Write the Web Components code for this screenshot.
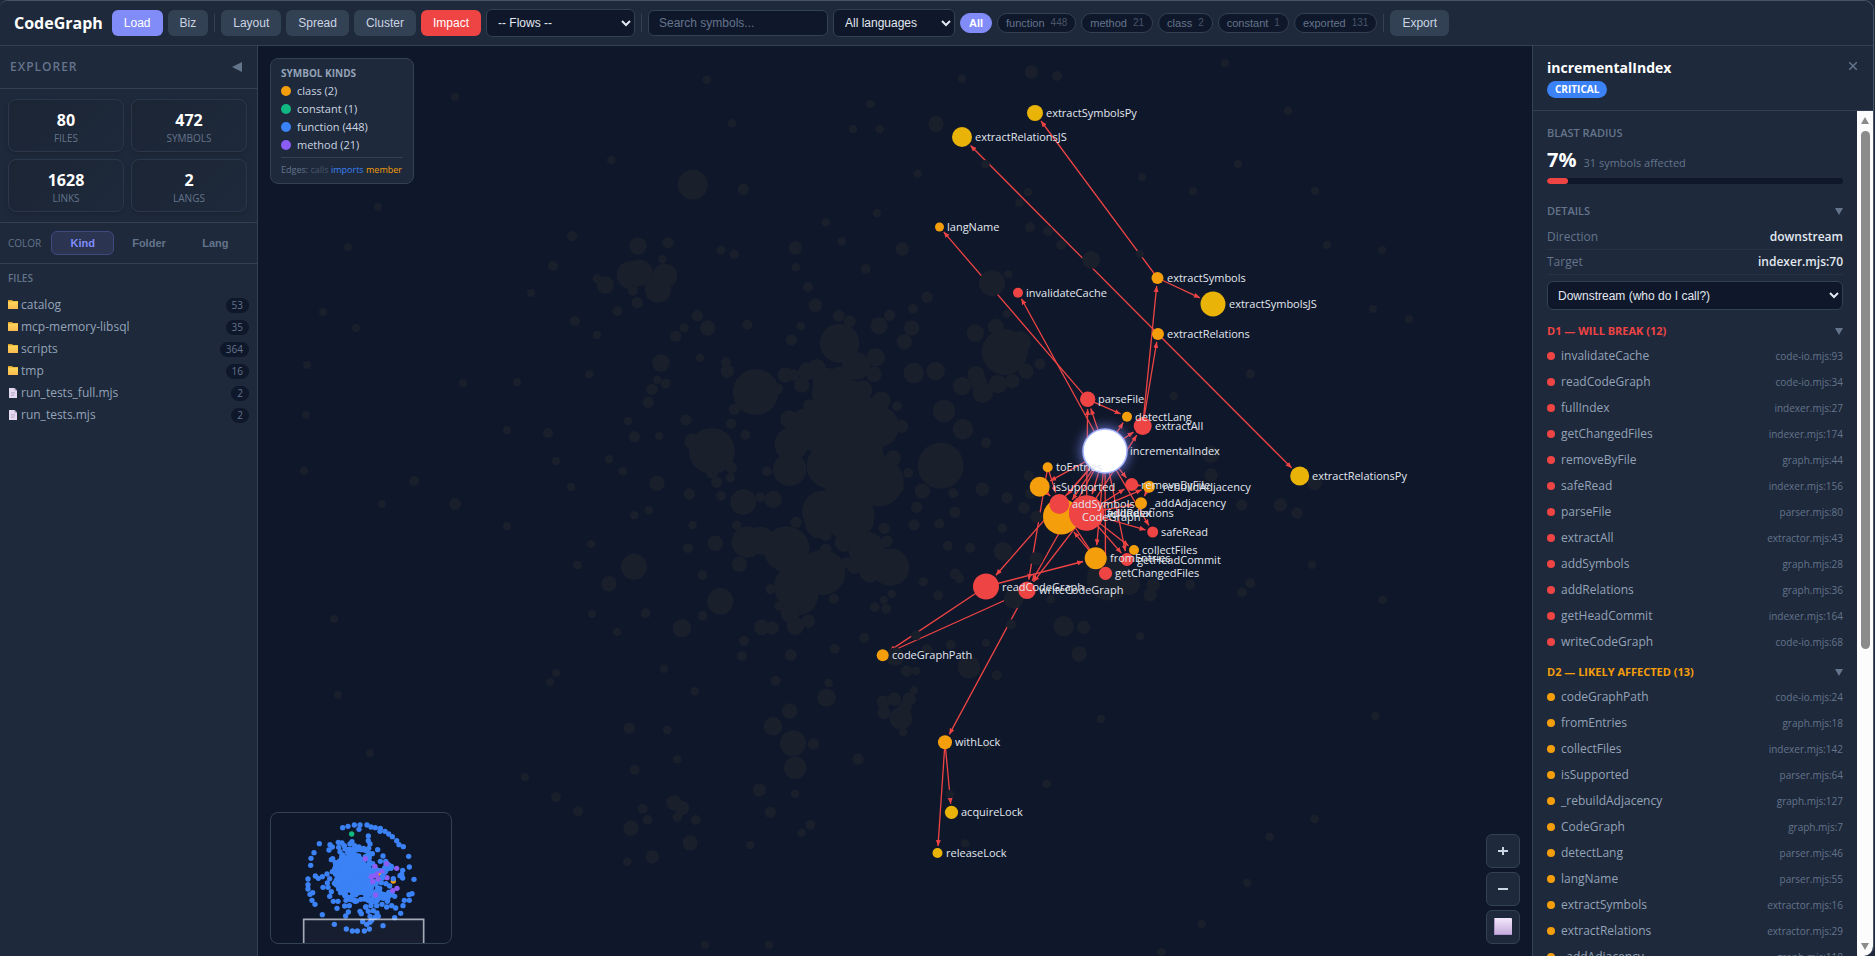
<!DOCTYPE html>
<html lang="en">
<head>
<meta charset="utf-8">
<title>CodeGraph</title>
<style>
  html, body { height: 100%; margin: 0; background: #1e293b; }
  body {
    --bg: #0f172a; --panel: #1e293b; --line: #334155; --muted: #64748b; --soft: #94a3b8;
    --text: #e2e8f0; --accent: #818cf8; --red: #ef4444; --amber: #f59e0b; --blue: #3b82f6;
    --ui: "Liberation Sans", Arial, sans-serif;
    font: 12px/18px "Open Sans", "Noto Sans", sans-serif; color: var(--text);
    overflow: hidden;
  }
</style>
</head>
<body>
<code-graph-app></code-graph-app>

<script>
const define = (name, html, init) => customElements.define(name, class extends HTMLElement {
  constructor() {
    super();
    const t = document.createElement('template');
    t.innerHTML = html;
    this.attachShadow({ mode: 'open' }).append(t.content.cloneNode(true));
  }
  connectedCallback() { if (init) init.call(this, this.shadowRoot); }
});

/* ---------- toolbar ---------- */
define('cg-button', `<style>
  :host { display: block; flex: none; }
  button { display: block; height: 26px; padding: 0 12px; border: 0; border-radius: 6px; background: #334155; color: #cbd5e1; font: 12px/26px var(--ui); cursor: pointer; }
  :host([kind=primary]) button { background: var(--accent); color: #fff; }
  :host([kind=danger]) button { background: var(--red); color: #fff; }
</style><button type="button"><slot></slot></button>`);

define('cg-pill', `<style>
  :host { display: block; flex: none; }
  button { display: flex; align-items: center; gap: 6px; height: 20px; padding: 0 8px; border: 1px solid var(--line); border-radius: 10px; background: var(--bg); color: var(--muted); font: 11px/18px var(--ui); cursor: pointer; }
  small { font-size: 10px; color: #475569; }
  small:empty { display: none; }
  :host([on]) button { background: var(--accent); border-color: var(--accent); color: #fff; font-weight: 700; }
</style><button type="button"><span><slot></slot></span><small></small></button>`,
function (r) { r.querySelector('small').textContent = this.getAttribute('count') || ''; });

define('cg-toolbar', `<style>
  :host { display: flex; align-items: center; gap: 5px; height: 44px; flex: none; padding: 0 14px; background: var(--panel); border-bottom: 1px solid var(--line); }
  h1 { margin: 0 4px 0 0; font-size: 16px; line-height: 24px; font-weight: 700; color: #fff; }
  hr { width: 1px; height: 18px; margin: 0 1px; border: 0; background: var(--line); flex: none; }
  select, input { box-sizing: border-box; flex: none; border: 1px solid var(--line); border-radius: 6px; background: var(--bg); color: var(--text); font: 12px/16px var(--ui); }
  select { height: 28px; padding: 0 2px 0 7px; }
  .flows { width: 149px; } .langs { width: 122px; }
  input { width: 180px; height: 26px; padding: 0 10px; }
  input::placeholder { color: var(--muted); }
  .pills { display: flex; gap: 5px; }
</style>
<h1>CodeGraph</h1>
<cg-button kind="primary">Load</cg-button><cg-button>Biz</cg-button><hr>
<cg-button>Layout</cg-button><cg-button>Spread</cg-button><cg-button>Cluster</cg-button><cg-button kind="danger">Impact</cg-button>
<select class="flows" aria-label="Flows"><option>-- Flows --</option></select><hr>
<input type="text" aria-label="Search symbols" placeholder="Search symbols...">
<select class="langs" aria-label="Language"><option>All languages</option></select>
<div class="pills"><cg-pill on>All</cg-pill><cg-pill count="448">function</cg-pill><cg-pill count="21">method</cg-pill><cg-pill count="2">class</cg-pill><cg-pill count="1">constant</cg-pill><cg-pill count="131">exported</cg-pill></div>
<hr><cg-button>Export</cg-button>`);

/* ---------- explorer ---------- */
define('cg-stat', `<style>
  :host { display: block; padding: 8px 0 7px; text-align: center; border: 1px solid #2b384b; border-radius: 8px; background: linear-gradient(135deg, #1b2534, #1e293b); box-shadow: 0 2px 5px rgba(0,0,0,.15); }
  b { display: block; font-size: 16px; line-height: 24px; color: #fff; }
  span { display: block; font-size: 10px; line-height: 12px; color: var(--muted); text-transform: uppercase; }
</style><b><slot></slot></b><span></span>`,
function (r) { r.querySelector('span').textContent = this.getAttribute('label'); });

define('cg-file', `<style>
  :host { display: flex; align-items: center; height: 22px; color: var(--soft); }
  svg { width: 10px; height: 12px; margin-right: 3px; flex: none; }
  a { flex: 1; color: inherit; text-decoration: none; }
  span { padding: 0 6px; border-radius: 8px; background: var(--bg); color: var(--muted); font-size: 10px; line-height: 15px; }
</style><svg viewBox="0 0 10 12"></svg><a href="#"><slot></slot></a><span></span>`,
function (r) {
  r.querySelector('span').textContent = this.getAttribute('count');
  r.querySelector('svg').innerHTML = this.hasAttribute('folder')
    ? '<defs><linearGradient id="f" x2="0" y2="1"><stop stop-color="#ffd95a"/><stop offset="1" stop-color="#f9b84f"/></linearGradient></defs><path d="M0 1h4l1 1h5v1H0z" fill="#d9a128"/><path d="M0 2.5h10V10H0z" fill="url(#f)"/>'
    : '<path d="M1 1h5.500L9 3.500V11H1z" fill="#e4d9ee"/><path d="M6.500 1 9 3.500H6.500z" fill="#a99bb8"/><path d="M3 5.500h4M3 7h4M3 8.500h3" stroke="#b5a8c4" stroke-width=".7"/>';
});

define('cg-explorer', `<style>
  :host { display: flex; flex-direction: column; width: 257px; flex: none; background: var(--panel); border-right: 1px solid var(--line); }
  header { display: flex; align-items: center; justify-content: space-between; height: 42px; padding: 0 15px 0 10px; border-bottom: 1px solid var(--line); }
  h2 { margin: 0; font-size: 12px; font-weight: 600; color: var(--muted); letter-spacing: 1px; }
  header button { padding: 0; border: 0; background: none; line-height: 0; cursor: pointer; }
  .stats { display: grid; grid-template-columns: 1fr 1fr; gap: 7px; padding: 10px 10px 10px 8px; border-bottom: 1px solid var(--line); }
  .color { display: flex; align-items: center; gap: 3px; height: 40px; padding: 0 10px 0 8px; border-bottom: 1px solid var(--line); }
  .color span { width: 35px; margin-right: 5px; font-size: 10px; font-weight: 500; color: var(--muted); }
  .color button { flex: 1 1 0; height: 24px; padding: 0; border: 1px solid transparent; border-radius: 6px; background: none; color: var(--muted); font: bold 11px/22px var(--ui); cursor: pointer; }
  .color .on { background: #2b3450; border-color: #3f4a80; color: var(--accent); }
  .files { padding: 6px 8px; }
  h3 { margin: 0 0 8px; font-size: 10px; line-height: 16px; font-weight: 600; color: var(--muted); }
</style>
<header><h2>EXPLORER</h2><button type="button" aria-label="Collapse"><svg width="10" height="10"><path d="M10 0v10L0 5z" fill="#64748b"/></svg></button></header>
<div class="stats"><cg-stat label="Files">80</cg-stat><cg-stat label="Symbols">472</cg-stat><cg-stat label="Links">1628</cg-stat><cg-stat label="Langs">2</cg-stat></div>
<div class="color"><span>COLOR</span><button type="button" class="on">Kind</button><button type="button">Folder</button><button type="button">Lang</button></div>
<div class="files"><h3>FILES</h3>
<cg-file folder count="53">catalog</cg-file><cg-file folder count="35">mcp-memory-libsql</cg-file><cg-file folder count="364">scripts</cg-file><cg-file folder count="16">tmp</cg-file><cg-file count="2">run_tests_full.mjs</cg-file><cg-file count="2">run_tests.mjs</cg-file></div>`);

/* ---------- graph ---------- */
const NODES = {
  extractSymbolsPy: [1035,113,8,'y'], extractRelationsJS: [962,137,10,'y'], langName: [939.5,227,4.5,'a'],
  invalidateCache: [1018,292.7,5,'r'], extractSymbols: [1157.5,278,6,'a'], extractSymbolsJS: [1213,304,12.5,'y'],
  extractRelations: [1158,334,6,'a'], extractRelationsPy: [1299.7,476,9.5,'y'], parseFile: [1087.7,399.3,7.7,'r'],
  detectLang: [1127,416.7,5,'a'], extractAll: [1142.7,426,9,'r'], toEntries: [1047.7,467.3,5,'a'],
  isSupported: [1039.7,486.7,10,'a'], CodeGraph: [1061,516.5,18,'a'], fullIndex: [1086.5,513,17.5,'r'],
  addRelations: [1086.5,513,17.5,'r'], addSymbols: [1059.3,504,10,'r'], removeByFile: [1131.7,484.5,6.5,'r'],
  _rebuildAdjacency: [1149,486.7,6,'a'], _addAdjacency: [1141,503.3,6,'a'], safeRead: [1152.7,532,5.5,'r'],
  getHeadCommit: [1127,559.5,6.5,'r'], collectFiles: [1134,550,5,'a'], fromEntries: [1095.7,558.3,11,'a'],
  getChangedFiles: [1105.5,573.3,6.6,'r'], writeCodeGraph: [1027,590.3,8.7,'r'], readCodeGraph: [986,586.5,13,'r'],
  codeGraphPath: [882.7,655.3,6,'a'], withLock: [945,742.3,7,'a'], acquireLock: [951.5,812.3,6.6,'y'],
  releaseLock: [937.5,853,5,'y'], incrementalIndex: [1105,451,22,'w']
};
const EDGES = `parseFile langName,parseFile detectLang,incrementalIndex parseFile,incrementalIndex detectLang,incrementalIndex extractAll,
incrementalIndex invalidateCache,extractAll extractSymbols,extractAll extractRelations,extractSymbols extractSymbolsPy,extractSymbols extractSymbolsJS,
extractRelations extractRelationsJS,extractRelations extractRelationsPy,incrementalIndex isSupported,incrementalIndex addSymbols,incrementalIndex fullIndex,
incrementalIndex CodeGraph,incrementalIndex removeByFile,incrementalIndex safeRead,incrementalIndex getHeadCommit,incrementalIndex getChangedFiles,
incrementalIndex fromEntries,incrementalIndex readCodeGraph,incrementalIndex writeCodeGraph,fullIndex collectFiles,fullIndex getHeadCommit,fullIndex safeRead,fullIndex writeCodeGraph,
fullIndex parseFile,fullIndex extractAll,fullIndex removeByFile,fullIndex _rebuildAdjacency,fullIndex _addAdjacency,_rebuildAdjacency _addAdjacency,removeByFile _rebuildAdjacency,
fromEntries CodeGraph,fromEntries addSymbols,isSupported addSymbols,toEntries addSymbols,toEntries writeCodeGraph,readCodeGraph fromEntries,readCodeGraph codeGraphPath,
writeCodeGraph codeGraphPath,writeCodeGraph withLock,withLock acquireLock,withLock releaseLock`.split(/,\s*/).map(e => e.trim().split(' '));

/* Unaffected symbols: [originX, originY, scale, "x y r, ..."] */
const FADED = [
[560,60,3,`440 59 13,516 190 13,931 132 13,879 207 13,959 207 13,1128 192 23,1206 56 13,1414 36 20,154 300 13,398 374 45,550 388 17,1276 313 13,1404 396 13,1378 428 13,1410 501 15,1073 341 13,951 459 13,797 487 13,845 544 13,38 529 14,234 558 26,324 548 17,307 598 13,483 571 13,523 583 14,706 563 20,1027 567 20,707 622 13,917 627 15,212 645 42,239 638 40,315 647 37,294 688 40,136 675 26,112 656 14,219 692 15,232 728 17,172 754 15,45 783 15,111 825 13,744 681 15,766 736 20,722 798 13,836 768 18,869 784 18,694 840 17,562 794 15,412 767 17,443 804 23,373 803 14,347 829 17,957 797 26,989 766 17,1055 804 23,1059 746 15,1101 712 17,1033 845 23,1296 669 39,1345 643 13,1340 761 13,1246 819 26,1307 800 24,1334 876 69,1380 847 33,1398 934 23,1440 912 17,839 850 59,888 918 42,947 892 28,942 943 23,1061 939 31,1127 933 28,1206 978 28,1248 944 26,1268 998 31,1255 965 26,1314 972 28,1357 963 22,303 909 26,420 893 13,498 907 15,502 934 20,88 943 13,292 959 13,317 971 15,276 988 17,265 1027 17,587 996 69,523 1048 17,652 986 17,630 965 18,676 945 23,701 945 18,742 934 27,770 925 28,725 975 23,800 965 42,840 960 40,820 1000 64,870 1020 60,908 990 29,964 1022 28,1011 1039 15,1025 1099 20,749 1038 20,688 1078 27,204 1083 13,223 1130 17,378 1080 17,298 1128 13,147 1198 13,188 1234 13,291 1270 23,33 1281 13,513 1091 15,556 1124 15,456 1173 69,398 1145 25,514 1223 17,511 1253 14,456 1238 18,470 1267 17,694 1153 50,740 1107 62,820 1100 100,900 1080 75,955 1100 62,689 1228 50,621 1234 15,808 1217 68,880 1180 90,900 1220 80,955 1264 76,1000 1194 23,1045 1239 15,1152 1053 34,1209 1108 31,1278 1149 15,1142 1217 69,1087 1293 23,1180 1300 15,1268 1288 20,1405 1246 14,1341 1313 17`],
[560,420,3,`388 222 17,483 227 15,550 246 39,601 232 15,640 238 26,223 286 13,266 271 13,398 315 13,384 385 15,466 370 23,94 372 13,54 436 13,222 440 39,147 491 23,96 582 13,171 636 13,257 580 15,366 625 28,427 465 15,428 587 15,481 544 40,530 316 14,562 366 47,603 362 42,538 433 23,680 388 69,708 307 17,790 275 64,870 290 74,860 230 70,780 310 45,797 345 18,852 368 28,797 389 18,788 457 68,860 428 17,883 440 22,920 390 55,992 442 56,930 455 32,973 325 17,981 364 17,1010 200 22,710 500 68,715 525 60,631 508 15,657 558 14,706 618 27,690 580 28,745 603 20,605 622 23,637 624 20,552 662 15,546 708 15,692 705 18,824 686 15,822 536 15,913 653 15,312 746 13,404 814 13,647 782 15,806 789 13,800 833 28,689 873 23,639 919 28,699 970 39,760 972 17,706 1043 34,598 1110 20,705 1121 13,631 1177 17,894 1018 17,208 925 17,322 930 13,352 1018 13,224 1050 15,54 1174 15,248 1166 15,262 1199 15,342 1148 23,366 1164 22,352 1192 14,407 1200 15,213 1225 23,390 1269 23,277 1311 20,571 1275 13,725 1238 13,751 1215 15,944 562 15,971 540 13,995 521 13,979 566 15,1005 710 28,1068 646 15,1101 688 16,1040 753 17,1068 753 13,1062 811 13,1172 674 15,1278 669 13,1227 742 34,1310 766 15,970 846 20,1003 838 20,1048 837 20,1035 862 20,972 878 20,1023 895 34,1030 936 13,1170 1122 13,1280 978 13,1215 1270 13,1361 536 30,1353 613 15,1135 526 15,1090 485 14,1186 462 17,1199 476 14,1163 377 15,1231 383 15,1328 394 28,1327 325 13,1185 277 17,1138 311 15,1062 315 17,1070 262 17,1392 263 17,1428 291 17,1430 416 20,202 1325 13`],
[1020,480,3,`32 40 17,12 83 17,50 110 17,48 236 20,268 295 67,327 312 33,400 315 20,390 345 20,511 314 15,666 337 15,691 310 15,92 358 13,131 439 31,191 442 20,361 469 13,178 522 23,781 75 20,831 99 17,876 254 13,1088 359 13,884 10 21,243 717 13,80 911 13,1066 707 13,884 1017 13,749 1070 13,682 1208 13,545 1331 13,424 1416 13`],
[960,370,3,`78 218 15,206 317 15,67 358 20,192 413 17,127 475 14,30 533 15,130 545 28,752 253 26,753 315 20,845 405 17,641 78 13,871 12 14`],
[0,0,1,`378 207 4,348 247 4,323 312 4,356 328 4,307 365 4,306 415 4,304 471 4,414 481 5,382 504 4,455 504 6,507 430 4,507 526 4,463 383 4,517 382 4,531 293 4,548 433 5,556 461 4,553 266 5,572 236 5,575 321 5,571 487 4,577 565 4,334 619 4,338 695 4,370 753 4,556 673 4,550 682 4,525 777 4,556 797 5,455 97 4,1057 76 5,1225 63 4,1142 177 4,1193 191 4,1238 164 4,1048 231 5,1061 245 5,1091 260 9,1140 254 4,1288 111 4,1315 191 4,1327 245 4,1382 250 4,1373 309 4,1409 319 4,1307 306 4,769 945 4,705 945 4,426 848 4`]
];

define('cg-canvas', `<style>
  :host { display: block; position: absolute; inset: 0; overflow: hidden; }
  svg { display: block; width: 100%; height: 100%; }
  text { font: 11px "Open Sans", "Noto Sans", sans-serif; fill: #e2e8f0; }
</style>
<svg role="img" aria-label="Dependency graph"><defs>
<marker id="tip" markerUnits="userSpaceOnUse" markerWidth="7" markerHeight="6" refX="6" refY="3" orient="auto"><path d="M0 .5 6 3 0 5.500z" fill="#ef4444"/></marker>
<filter id="glow" x="-100%" y="-100%" width="300%" height="300%"><feGaussianBlur stdDeviation="6"/></filter></defs>
<g transform="translate(-258 -46)"></g></svg>`,
function (r) {
  const fill = { a: '#f59e0b', r: '#ef4444', y: '#eab308', w: '#fff' };
  let s = '<g stroke="#ef4444" stroke-width="1.3">';
  for (const [from, to] of EDGES) {
    const a = NODES[from], b = NODES[to], dx = b[0] - a[0], dy = b[1] - a[1], d = Math.hypot(dx, dy), k = (d - b[2] - 2) / d;
    s += `<line x1="${a[0]}" y1="${a[1]}" x2="${(a[0] + dx * k).toFixed(1)}" y2="${(a[1] + dy * k).toFixed(1)}" marker-end="url(#tip)"/>`;
  }
  s += '</g><g fill="#1a1f2c">';
  for (const [ox, oy, sc, list] of FADED)
    for (const n of list.split(',')) {
      const [x, y, q] = n.split(' ').map(Number);
      s += `<circle cx="${(ox + x / sc).toFixed(1)}" cy="${(oy + y / sc).toFixed(1)}" r="${(q / sc).toFixed(1)}"/>`;
    }
  s += '</g><circle cx="1105" cy="451" r="24" fill="#818cf8" fill-opacity=".75" filter="url(#glow)"/>';
  for (const [x, y, q, c] of Object.values(NODES))
    s += `<circle cx="${x}" cy="${y}" r="${q}" fill="${fill[c]}"${c === 'w' ? ' stroke="#a5b4fc" stroke-width="1.500"' : ''}/>`;
  for (const [name, [x, y, q]] of Object.entries(NODES))
    s += `<text x="${Math.round(x + q + 3)}" y="${Math.round(y + 4)}">${name}</text>`;
  r.querySelector('svg > g').innerHTML = s;
});

define('cg-legend', `<style>
  :host { display: block; box-sizing: border-box; width: 144px; padding: 6px 10px 5px; border: 1px solid var(--line); border-radius: 8px; background: var(--panel); font-size: 11px; color: #cbd5e1; }
  h3 { margin: 0; font-size: 10px; line-height: 17px; color: var(--soft); }
  ul { margin: 0; padding: 0; list-style: none; }
  li { display: flex; align-items: center; gap: 6px; line-height: 18px; white-space: nowrap; }
  i { width: 10px; height: 10px; border-radius: 5px; }
  p { margin: 3px 0 0; padding-top: 4px; border-top: 1px solid var(--line); font-size: 9px; line-height: 16px; color: var(--muted); white-space: nowrap; }
</style><h3>SYMBOL KINDS</h3>
<ul><li><i style="background:#f59e0b"></i>class (2)</li><li><i style="background:#10b981"></i>constant (1)</li><li><i style="background:#3b82f6"></i>function (448)</li><li><i style="background:#8b5cf6"></i>method (21)</li></ul>
<p>Edges: <span style="color:#475569">calls</span> <span style="color:#3b82f6">imports</span> <span style="color:#f59e0b">member</span></p>`);

define('cg-minimap', `<style>
  :host { display: block; width: 180px; height: 130px; border: 1px solid var(--line); border-radius: 8px; background: var(--bg); overflow: hidden; }
  svg { display: block; width: 100%; height: 100%; }
</style><svg viewBox="33 102 540 390" role="img" aria-label="Minimap"></svg>`,
function (r) {
  let seed = 7;
  const rnd = () => (seed = (seed * 16807) % 2147483647) / 2147483647;
  const gauss = () => rnd() + rnd() + rnd() + rnd() - 2;
  const dot = (x, y) => `<circle cx="${x.toFixed(0)}" cy="${y.toFixed(0)}" r="8"/>`;
  const ring = `248 146,264 142,283 138,300 138,297 151,321 138,333 144,346 146,361 148,360 157,375 157,386 165,397 173,410 185,417 197,430 203,446 232,448 264,462 301,448 364,456 344,447 347,433 364,429 380,422 403,404 416,369 440,328 450,313 456,292 456,277 456,259 450,223 436,187 407,165 376,156 364,150 346,158 341,144 330,144 317,144 300,152 259,153 238,162 221,178 194,166 291,175 298,187 293,201 285,189 325,204 325,202 312,210 197,217 204,207 213,214 242,209 352,220 367,231 388,254 381,268 380,265 399,257 411,235 190,246 192,236 205,253 200,240 218,255 210,248 228,270 195,284 200,276 212,290 212,286 228,325 171,325 185,330 195,326 208,326 222,337 224,353 212,369 231,428 274,420 290,428 297,425 286,300 397,304 404,330 412,351 402,355 412,345 415,308 428,320 436,330 430,335 424,380 384,395 380,407 387,386 340,404 352,396 345,388 350,378 314,389 321,393 268,350 380,340 395,333 380,325 397,318 384`.split(',');
  let s = '<g fill="#3b82f6">';
  for (const p of ring) s += dot(...p.split(' ').map(Number));
  for (let i = 0; i < 420; i++) s += dot(286 + gauss() * 48, 288 + gauss() * 58);
  for (let i = 0; i < 40; i++) s += dot(350 + gauss() * 30, 350 + gauss() * 22);
  for (let i = 0; i < 15; i++) s += dot(375 + gauss() * 16, 272 + gauss() * 20);
  s += '</g><g fill="#8b5cf6">';
  for (const p of '316 239,380 254,410 268,411 328,398 335,345 262,334 293,345 290,355 300,338 308,366 278,381 296,353 285,347 348'.split(',')) s += dot(...p.split(' ').map(Number));
  s += '</g><g fill="#10b981">' + dot(275, 165) + '</g><g fill="#f59e0b">' + dot(400, 306) + '<circle cx="360" cy="286" r="4"/></g><g fill="#3b82f6">' + dot(400, 299) + dot(368, 290) + '</g>';
  s += '<path d="M131 492V421H491V492" fill="#fff" fill-opacity=".03" stroke="#e2e8f0" stroke-opacity=".7" stroke-width="5"/>';
  r.querySelector('svg').innerHTML = s;
});

define('cg-zoom', `<style>
  :host { display: grid; gap: 4px; }
  button { display: grid; place-items: center; width: 34px; height: 34px; padding: 0; border: 1px solid var(--line); border-radius: 6px; background: var(--panel); cursor: pointer; }
</style>
<button type="button" aria-label="Zoom in"><svg width="10" height="10"><path d="M0 5h10M5 1v8" stroke="#cbd5e1" stroke-width="2"/></svg></button>
<button type="button" aria-label="Zoom out"><svg width="10" height="10"><path d="M0 5h10" stroke="#cbd5e1" stroke-width="2"/></svg></button>
<button type="button" aria-label="Fit to view"><svg width="18" height="18"><defs><linearGradient id="g" x2="0" y2="1"><stop stop-color="#f3e8fa"/><stop offset="1" stop-color="#c4a9dc"/></linearGradient></defs><rect width="18" height="17" rx="1" fill="url(#g)"/><path d="M0 16.500h18M.5 0v17" stroke="#b193cc"/></svg></button>`);

define('cg-stage', `<style>
  :host { display: block; position: relative; flex: 1; min-width: 0; background: var(--bg); overflow: hidden; }
  cg-legend, cg-minimap, cg-zoom { position: absolute; }
  cg-legend { left: 12px; top: 12px; } cg-minimap { left: 12px; bottom: 12px; } cg-zoom { right: 12px; bottom: 12px; }
</style><cg-canvas></cg-canvas><cg-legend></cg-legend><cg-minimap></cg-minimap><cg-zoom></cg-zoom>`);

/* ---------- details ---------- */
define('cg-section', `<style>
  :host { display: block; }
  h3 { display: flex; align-items: center; justify-content: space-between; margin: 0; font-size: 11px; line-height: 18px; font-weight: 600; color: var(--head, var(--muted)); }
  :host([tone]) h3 { font-weight: 700; }
  :host([tone=red]) { --head: var(--red); } :host([tone=amber]) { --head: var(--amber); }
  svg { display: none; } :host([fold]) svg { display: block; }
</style><h3><span></span><svg width="8" height="7"><path d="M0 0h8L4 7z" fill="#64748b"/></svg></h3><slot></slot>`,
function (r) { r.querySelector('span').textContent = this.getAttribute('heading'); });

define('cg-symbol', `<style>
  :host { display: flex; align-items: center; height: 26px; color: var(--soft); }
  i { width: 8px; height: 8px; margin-right: 6px; border-radius: 4px; background: var(--head); }
  a { flex: 1; color: inherit; text-decoration: none; }
  span { font-size: 10px; color: var(--muted); }
</style><i></i><a href="#"><slot></slot></a><span></span>`,
function (r) { r.querySelector('span').textContent = this.getAttribute('at'); });

define('cg-fact', `<style>
  :host { display: flex; justify-content: space-between; height: 24px; line-height: 24px; border-bottom: 1px solid #263346; color: var(--muted); }
  b { font-weight: 600; color: var(--text); }
</style><span></span><b><slot></slot></b>`,
function (r) { r.querySelector('span').textContent = this.getAttribute('label'); });

const D1 = 'invalidateCache code-io.mjs:93,readCodeGraph code-io.mjs:34,fullIndex indexer.mjs:27,getChangedFiles indexer.mjs:174,removeByFile graph.mjs:44,safeRead indexer.mjs:156,parseFile parser.mjs:80,extractAll extractor.mjs:43,addSymbols graph.mjs:28,addRelations graph.mjs:36,getHeadCommit indexer.mjs:164,writeCodeGraph code-io.mjs:68';
const D2 = 'codeGraphPath code-io.mjs:24,fromEntries graph.mjs:18,collectFiles indexer.mjs:142,isSupported parser.mjs:64,_rebuildAdjacency graph.mjs:127,CodeGraph graph.mjs:7,detectLang parser.mjs:46,langName parser.mjs:55,extractSymbols extractor.mjs:16,extractRelations extractor.mjs:29,_addAdjacency graph.mjs:118';
const rows = list => list.split(',').map(l => { const [n, at] = l.split(' '); return `<cg-symbol at="${at}">${n}</cg-symbol>`; }).join('');

define('cg-details', `<style>
  :host { display: flex; flex-direction: column; width: 340px; flex: none; border-left: 1px solid var(--line); background: var(--panel); }
  header { position: relative; box-sizing: border-box; height: 65px; flex: none; padding: 12px 14px; border-bottom: 1px solid var(--line); }
  h2 { margin: 0 0 3px; font-size: 14px; line-height: 20px; color: #fff; }
  mark { display: inline-block; box-sizing: border-box; padding: 0 8px; border-radius: 9px; background: var(--blue); color: #fff; font-size: 10px; line-height: 17px; font-weight: 700; vertical-align: top; }
  header button { position: absolute; right: 16px; top: 16px; padding: 0; border: 0; background: none; line-height: 0; cursor: pointer; }
  .wrap { display: flex; flex: 1; min-height: 0; }
  .body { flex: 1; overflow: auto; scrollbar-width: none; padding: 13px 14px 0; }
  .body > cg-section + cg-section { display: block; margin-top: 18px; }
  .body > cg-section[tone] { margin-top: 8px; }
  .score { display: flex; align-items: baseline; gap: 7px; margin: 4px 0 1px; color: var(--muted); font-size: 11px; line-height: 28px; }
  .score b { font-size: 20px; color: #fff; }
  .bar { height: 6px; border-radius: 3px; background: var(--bg); overflow: hidden; }
  .bar i { display: block; width: 7%; height: 100%; border-radius: 3px; background: var(--red); }
  .facts { padding-top: 5px; }
  select { display: block; box-sizing: border-box; width: 100%; height: 29px; margin: 6px 0 12px; padding: 0 0 0 6px; border: 1px solid var(--line); border-radius: 6px; background: var(--bg); color: var(--text); font: 12px/16px var(--ui); }
  .list { padding-top: 3px; }
  .rail { width: 16px; flex: none; display: flex; flex-direction: column; align-items: center; background: #fcfcfc; padding: 6px 0; box-sizing: border-box; border-bottom-right-radius: 8px; }
  .rail i { width: 9px; flex: 0 1 518px; margin: 7px 0 auto; border-radius: 5px; background: #8b8b8b; }
</style>
<header><h2>incrementalIndex</h2><mark>CRITICAL</mark><button type="button" aria-label="Close"><svg width="8" height="8"><path d="M0 0l8 8M8 0 0 8" stroke="#64748b" stroke-width="1.500"/></svg></button></header>
<div class="wrap"><div class="body">
<cg-section heading="BLAST RADIUS"><div class="score"><b>7%</b><span>31 symbols affected</span></div><div class="bar"><i></i></div></cg-section>
<cg-section heading="DETAILS" fold><div class="facts"><cg-fact label="Direction">downstream</cg-fact><cg-fact label="Target">indexer.mjs:70</cg-fact></div>
<select aria-label="Direction"><option>Downstream (who do I call?)</option></select></cg-section>
<cg-section tone="red" heading="D1 — WILL BREAK (12)" fold><div class="list">${rows(D1)}</div></cg-section>
<cg-section tone="amber" heading="D2 — LIKELY AFFECTED (13)" fold><div class="list">${rows(D2)}</div></cg-section>
</div><div class="rail"><svg width="8" height="7"><path d="M4 0l4 7H0z" fill="#8b8b8b"/></svg><i></i><svg width="8" height="7"><path d="M0 0h8L4 7z" fill="#8b8b8b"/></svg></div></div>`);

define('code-graph-app', `<style>
  :host { display: flex; flex-direction: column; box-sizing: border-box; height: 100vh; margin-right: 1px; border: solid #475569; border-width: 1px 1px 0 0; border-radius: 8px 10px 10px 0; overflow: hidden; background: var(--panel); }
  main { display: flex; flex: 1; min-height: 0; }
</style><cg-toolbar></cg-toolbar><main><cg-explorer></cg-explorer><cg-stage></cg-stage><cg-details></cg-details></main>`);
</script>
</body>
</html>
